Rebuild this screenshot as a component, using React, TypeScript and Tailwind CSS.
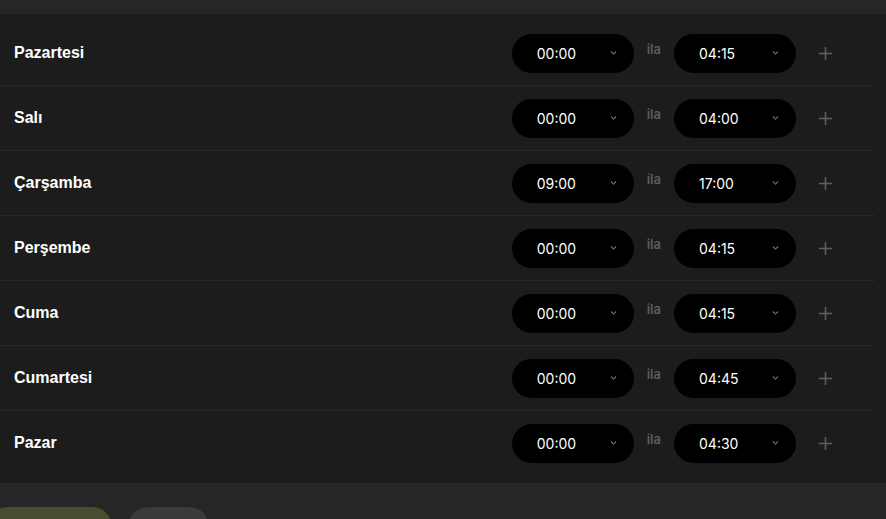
import React from "react";

const days: { name: string; from: string; to: string }[] = [
  { name: "Pazartesi", from: "00:00", to: "04:15" },
  { name: "Salı", from: "00:00", to: "04:00" },
  { name: "Çarşamba", from: "09:00", to: "17:00" },
  { name: "Perşembe", from: "00:00", to: "04:15" },
  { name: "Cuma", from: "00:00", to: "04:15" },
  { name: "Cumartesi", from: "00:00", to: "04:45" },
  { name: "Pazar", from: "00:00", to: "04:30" },
];

function Chevron() {
  return (
    <svg width="7" height="5" viewBox="0 0 7 5" className="absolute right-[17px] top-1/2 -translate-y-1/2" fill="none">
      <path d="M1.2 1.3 L3.5 3.5 L5.8 1.3" stroke="#b5b5b5" strokeWidth="1" strokeLinecap="round" strokeLinejoin="round" />
    </svg>
  );
}

function Pill({ value }: { value: string }) {
  return (
    <div className="relative flex h-[39px] w-[122px] items-center rounded-full bg-black pl-[25px] text-[14px] font-normal text-white">
      <span>{value}</span>
      <Chevron />
    </div>
  );
}

function Plus() {
  return (
    <svg width="13" height="13" viewBox="0 0 13 13" fill="none">
      <path d="M6.5 0.5 V12.5 M0.5 6.5 H12.5" stroke="#5e5e5e" strokeWidth="1.6" strokeLinecap="round" />
    </svg>
  );
}

export default function App() {
  return (
    <div
      className="h-[519px] w-full overflow-hidden bg-[#262626] pt-[14px]"
      style={{ fontFamily: "Inter, 'Noto Sans', sans-serif" }}
    >
      <div className="-ml-3 w-[calc(100%+12px)]">
        <div className="bg-[#1c1c1c] pt-[7px] pb-2">
          {days.map((d, i) => (
            <div
              key={d.name}
              className={
                "mr-[11px] flex items-center justify-between pl-[26px] pr-[43px] " +
                (i < days.length - 1 ? "h-[65px] border-b border-[#272727]" : "h-[64px]")
              }
            >
              <span
                className="text-[16px] font-bold text-white"
                style={{ fontFamily: "'Liberation Sans', Arial, sans-serif" }}
              >
                {d.name}
              </span>
              <div className="flex items-center">
                <Pill value={d.from} />
                <span className="mx-[13px] mb-[6px] text-[13px] font-semibold text-[#5c5c5c]">ila</span>
                <Pill value={d.to} />
                <div className="ml-[23px] flex items-center">
                  <Plus />
                </div>
              </div>
            </div>
          ))}
        </div>
        <div className="mt-6 flex gap-4">
          <button className="flex h-10 w-[124px] items-center justify-center rounded-full bg-[#474d31] text-[14px] font-semibold text-white">
            Kaydet
          </button>
          <button className="flex h-10 w-[81px] items-center justify-center rounded-full bg-[#3a3a3a] text-[14px] font-semibold text-white">
            İptal
          </button>
        </div>
      </div>
    </div>
  );
}
